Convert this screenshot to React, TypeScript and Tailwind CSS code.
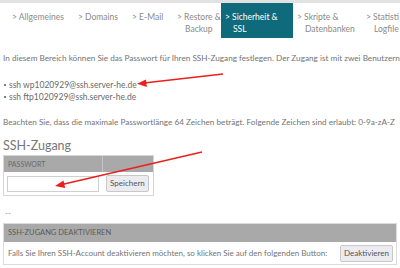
import React from "react";

const tabs = [
    { l1: "Allgemeines", l2: "", w: "w-[66px]" },
    { l1: "Domains", l2: "", w: "w-[54px]" },
    { l1: "E-Mail", l2: "", w: "w-[45px]" },
    { l1: "Restore &", l2: "Backup", w: "w-[48px]" },
    { l1: "Sicherheit &", l2: "SSL", w: "w-[72px]", active: true },
    { l1: "Skripte &", l2: "Datenbanken", w: "w-[69px]" },
    { l1: "Statisti", l2: "Logfile", w: "w-[60px]" },
];

function Arrows() {
    return (
        <svg className="absolute left-0 top-0 pointer-events-none" width="400" height="268">
            <line x1="223" y1="74" x2="144" y2="83" stroke="#e8201f" strokeWidth="1.6" />
            <path d="M137,83.8 L146,79.5 L146.8,87 Z" fill="#e8201f" />
            <line x1="202" y1="152" x2="62" y2="184.5" stroke="#e8201f" strokeWidth="1.6" />
            <path d="M55,186 L63.5,180.5 L65.2,188 Z" fill="#e8201f" />
        </svg>
    );
}

export default function App() {
    return (
        <div className="relative w-[400px] h-[268px] overflow-hidden bg-white text-[#747474] whitespace-nowrap" style={{ fontFamily: "Lato, 'Open Sans', sans-serif" }}>
            <div className="h-[3px] bg-[#e2e2e2]" />
            <div className="flex pl-[8px] h-[35px] text-[8.5px] leading-[12px] text-[#8a8a8a]">
                {tabs.map((t) => (
                    <div
                        key={t.l1}
                        className={`${t.w} shrink-0 pt-[8px] pl-[4px] ${t.active ? "bg-[#0f6b7c] text-white" : ""}`}
                    >
                        <div>&gt; {t.l1}</div>
                        {t.l2 && <div className="pl-[8px]">{t.l2}</div>}
                    </div>
                ))}
            </div>

            <div className="pl-[3px] pt-[15px] text-[8.2px] leading-[10px]">
                In diesem Bereich können Sie das Passwort für Ihren SSH-Zugang festlegen. Der Zugang ist mit zwei Benutzern möglich:
            </div>

            <ul className="pl-[4px] pt-[16px] text-[8.5px] leading-[12px] text-[#6a6a6a]">
                <li className="flex items-center gap-[3px]">
                    <span className="w-[2px] h-[2px] bg-[#555] rounded-full" />
                    ssh wp1020929@ssh.server-he.de
                </li>
                <li className="flex items-center gap-[3px]">
                    <span className="w-[2px] h-[2px] bg-[#555] rounded-full" />
                    ssh ftp1020929@ssh.server-he.de
                </li>
            </ul>

            <div className="pl-[3px] pt-[14px] text-[8.2px] leading-[10px]">
                Beachten Sie, dass die maximale Passwortlänge 64 Zeichen beträgt. Folgende Zeichen sind erlaubt: 0-9a-zA-Z
            </div>

            <div className="pl-[3px] pt-[11px] text-[12.5px] leading-[16px] text-[#777]">SSH-Zugang</div>

            <div className="ml-[3px] mt-[1px] w-[151px] border border-[#d6d6d6]">
                <div className="flex h-[16px] bg-[#a9a9a9] text-[7px] leading-[16px] text-[#6a6a6a]">
                    <div className="w-[99px] pl-[4px] border-r border-[#c4c4c4]">PASSWORT</div>
                    <div className="flex-1" />
                </div>
                <div className="flex items-center h-[23px] pl-[3px] gap-[7px]">
                    <div className="w-[92px] h-[16px] border border-[#cfcfcf] bg-white" />
                    <div className="h-[17px] px-[3px] border border-[#c8c8c8] rounded-[2px] bg-[#ececf0] text-[8px] leading-[15px] text-[#555]">
                        Speichern
                    </div>
                </div>
            </div>

            <div className="pl-[5px] pt-[13px] text-[8px] leading-[8px] text-[#888]">--</div>

            <div className="ml-[3px] mt-[6px] w-[394px] border border-[#dcdcdc]">
                <div className="h-[18px] bg-[#a9a9a9] pl-[4px] text-[7.5px] leading-[18px] text-[#5a5a5a]">
                    SSH-ZUGANG DEAKTIVIEREN
                </div>
                <div className="flex items-center justify-between h-[22px] pl-[4px] pr-[3px] text-[8px]">
                    <span>Falls Sie Ihren SSH-Account deaktivieren möchten, so klicken Sie auf den folgenden Button:</span>
                    <div className="h-[17px] px-[3px] border border-[#c8c8c8] rounded-[2px] bg-[#ececf0] text-[8px] leading-[15px] text-[#555]">
                        Deaktivieren
                    </div>
                </div>
            </div>

            <Arrows />
        </div>
    );
}
